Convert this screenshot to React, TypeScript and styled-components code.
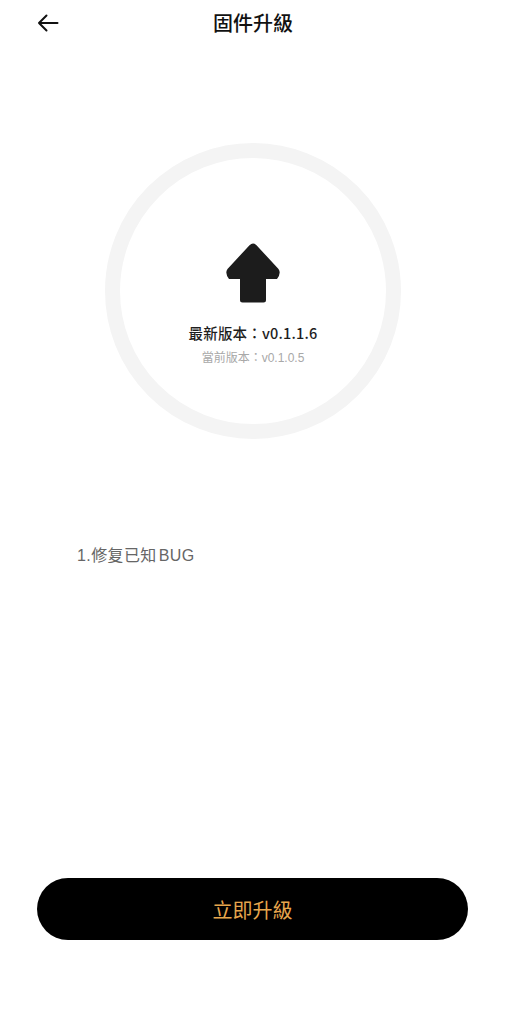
import React from "react";
import styled, { createGlobalStyle } from "styled-components";

const GlobalStyle = createGlobalStyle`
  html, body {
    margin: 0;
    padding: 0;
    background: #ffffff;
  }
  body {
    font-family: "Noto Sans", "Noto Sans CJK TC", sans-serif;
  }
`;

const Page = styled.div`
  width: 506px;
  height: 1024px;
  display: flex;
  flex-direction: column;
  background: #ffffff;
  box-sizing: border-box;
`;

const Header = styled.div`
  height: 45px;
  display: grid;
  grid-template-columns: 80px 1fr 80px;
  align-items: center;
`;

const BackButton = styled.button`
  border: none;
  background: none;
  padding: 0 0 0 37px;
  display: flex;
  align-items: center;
  cursor: pointer;
`;

const Title = styled.h1`
  margin: 0;
  text-align: center;
  font-family: "Noto Sans CJK TC", sans-serif;
  font-size: 20px;
  font-weight: 500;
  color: #111111;
`;

const Ring = styled.div`
  width: 266px;
  height: 181px;
  margin: 98px auto 0;
  border: 15px solid #f4f4f4;
  border-radius: 50%;
  display: flex;
  flex-direction: column;
  align-items: center;
  justify-content: flex-start;
  padding-top: 85px;
  box-sizing: content-box;
`;

const Latest = styled.div`
  margin-top: 20px;
  font-family: "Noto Sans CJK TC", sans-serif;
  font-size: 14.5px;
  font-weight: 500;
  color: #1e1e1e;
  line-height: 20px;
  letter-spacing: 0.2px;
`;

const Current = styled.div`
  margin-top: 7px;
  font-family: "Liberation Sans", "Noto Sans CJK TC", sans-serif;
  font-size: 12px;
  color: #a8a8a8;
  line-height: 16px;
`;

const Notes = styled.div`
  margin: 105px 0 0 77px;
  font-family: "Liberation Sans", "Noto Sans CJK TC", sans-serif;
  font-size: 16px;
  color: #666666;
  line-height: 24px;
  letter-spacing: 0.4px;
`;

const BugTag = styled.span`
  margin-left: 2px;
`;

const Spacer = styled.div`
  flex: 1;
`;

const UpgradeButton = styled.button`
  margin: 0 38px 84px 37px;
  height: 62px;
  border: none;
  border-radius: 31px;
  background: #000000;
  color: #e7a64d;
  font-family: "Noto Sans CJK TC", sans-serif;
  font-size: 20px;
  cursor: pointer;
`;

function UpArrow() {
  return (
    <svg width="56" height="60" viewBox="0 0 56 60">
      <path
        d="M24.5 2.2 Q28 -1 31.5 2.2 L53.5 26 Q56.5 30 52 36 L41 36 L41 57 Q41 59.5 38.5 59.5 L17.5 59.5 Q15 59.5 15 57 L15 36 L4 36 Q-0.5 30 2.5 26 Z"
        fill="#1c1c1c"
      />
    </svg>
  );
}

export default function App() {
  return (
    <Page>
      <GlobalStyle />
      <Header>
        <BackButton aria-label="back">
          <svg width="22" height="18" viewBox="0 0 22 18">
            <path
              d="M20.5 9 H2 M9.5 1.5 L2 9 L9.5 16.5"
              fill="none"
              stroke="#111"
              strokeWidth="2"
              strokeLinecap="round"
              strokeLinejoin="round"
            />
          </svg>
        </BackButton>
        <Title>固件升級</Title>
        <div />
      </Header>
      <Ring>
        <UpArrow />
        <Latest>最新版本：v0.1.1.6</Latest>
        <Current>當前版本：v0.1.0.5</Current>
      </Ring>
      <Notes>
        1.修复已知<BugTag>BUG</BugTag>
      </Notes>
      <Spacer />
      <UpgradeButton>立即升級</UpgradeButton>
    </Page>
  );
}
